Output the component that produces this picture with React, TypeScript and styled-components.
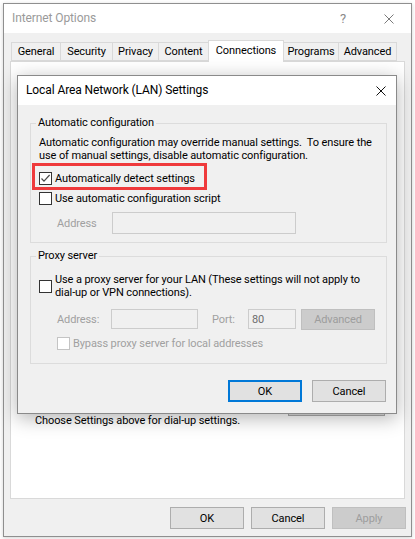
import React from "react"
import styled, { createGlobalStyle } from "styled-components"

const GlobalStyle = createGlobalStyle`
  html, body {
    margin: 0;
    padding: 0;
    background: #ffffff;
  }
  * {
    box-sizing: border-box;
  }
  body {
    font-family: Roboto, "Noto Sans", sans-serif;
    font-size: 11px;
    letter-spacing: -0.1px;
    color: #000000;
  }
`

const tabs = [
  { label: "General", w: 50 },
  { label: "Security", w: 53 },
  { label: "Privacy", w: 47 },
  { label: "Content", w: 51 },
  { label: "Connections", w: 76, active: true },
  { label: "Programs", w: 56 },
  { label: "Advanced", w: 59 },
]

const Page = styled.div`
  position: relative;
  width: 415px;
  height: 539px;
  padding: 3px 3px 2px 3px;
  background: #ffffff;
  overflow: hidden;
`

const Window = styled.div`
  width: 409px;
  height: 534px;
  border: 1px solid #8f8f8f;
  background: #f0f0f0;
  display: flex;
  flex-direction: column;
  box-shadow: 0 1px 4px rgba(0, 0, 0, 0.18);
`

const TitleBar = styled.div`
  height: 29px;
  background: #ffffff;
  display: flex;
  align-items: center;
  padding-left: 8px;
  flex-shrink: 0;
`

const Title = styled.div<{ $dim?: boolean }>`
  flex: 1;
  font-size: 12px;
  padding-bottom: 1px;
  color: ${(p) => (p.$dim ? "#9a9a9a" : "#000000")};
`

const CaptionButton = styled.div<{ $w: number }>`
  width: ${(p) => p.$w}px;
  height: 100%;
  display: flex;
  align-items: center;
  justify-content: center;
  color: #8a8a8a;
  font-size: 13px;
`

const WinBody = styled.div`
  flex: 1;
  display: flex;
  flex-direction: column;
  padding: 7px 6px 7px 6px;
  min-height: 0;
`

const TabStrip = styled.div`
  height: 21px;
  display: flex;
  align-items: flex-end;
  padding-left: 1px;
  position: relative;
  z-index: 1;
  flex-shrink: 0;
`

const Tab = styled.div<{ $w: number; $active?: boolean }>`
  width: ${(p) => p.$w}px;
  height: ${(p) => (p.$active ? 22 : 19)}px;
  margin-bottom: ${(p) => (p.$active ? -1 : 0)}px;
  margin-left: -1px;
  &:first-child {
    margin-left: 0;
  }
  border: 1px solid #d9d9d9;
  border-bottom: ${(p) => (p.$active ? "none" : "1px solid #d9d9d9")};
  background: ${(p) => (p.$active ? "#ffffff" : "#f0f0f0")};
  display: flex;
  align-items: center;
  justify-content: center;
  padding-bottom: ${(p) => (p.$active ? 2 : 0)}px;
  white-space: nowrap;
`

const Panel = styled.div`
  flex: 1;
  background: #ffffff;
  border: 1px solid #d9d9d9;
  padding: 332px 19px 0 24px;
  position: relative;
  z-index: 0;
`

const LanRow = styled.div`
  display: flex;
  justify-content: space-between;
  align-items: flex-start;
`

const Note = styled.div`
  padding-top: 20px;
  line-height: 13px;
`

const PushButton = styled.button<{ $w?: number; $variant?: "default" | "disabled" }>`
  width: ${(p) => p.$w ?? 74}px;
  height: 22px;
  font-family: inherit;
  font-size: 11px;
  letter-spacing: -0.1px;
  padding: 0;
  background: ${(p) => (p.$variant === "disabled" ? "#cccccc" : "#e1e1e1")};
  color: ${(p) => (p.$variant === "disabled" ? "#9d9d9d" : "#000000")};
  border: ${(p) =>
    p.$variant === "default"
      ? "2px solid #0078d7"
      : p.$variant === "disabled"
      ? "1px solid #bfbfbf"
      : "1px solid #adadad"};
  flex-shrink: 0;
`

const ButtonRow = styled.div<{ $gap: number; $top: number; $right: number }>`
  display: flex;
  justify-content: flex-end;
  gap: ${(p) => p.$gap}px;
  margin-top: ${(p) => p.$top}px;
  margin-right: ${(p) => p.$right}px;
  flex-shrink: 0;
`

const Dialog = styled.div`
  position: absolute;
  left: 17px;
  top: 75px;
  width: 380px;
  height: 339px;
  border: 1px solid #8a8a8a;
  background: #f0f0f0;
  display: flex;
  flex-direction: column;
  box-shadow: 0 4px 18px rgba(0, 0, 0, 0.3);
  z-index: 2;
`

const DialogBody = styled.div`
  flex: 1;
  display: flex;
  flex-direction: column;
  padding: 0 9px 10px 12px;
`

const Group = styled.fieldset<{ $top: number; $pt: number; $pb: number }>`
  margin: ${(p) => p.$top}px 0 0 0;
  padding: ${(p) => p.$pt}px 9px ${(p) => p.$pb}px 8px;
  border: 1px solid #dcdcdc;
  min-width: 0;
`

const Legend = styled.legend`
  padding: 0 2px;
  margin-left: -3px;
  line-height: 14px;
`

const Para = styled.p`
  margin: 0;
  line-height: 13px;
  white-space: nowrap;
`

const CheckRow = styled.div<{ $top: number; $indent?: number; $h?: number }>`
  display: flex;
  align-items: center;
  gap: 3px;
  margin-top: ${(p) => p.$top}px;
  padding-left: ${(p) => p.$indent ?? 0}px;
  min-height: ${(p) => p.$h ?? 13}px;
`

const Box = styled.span<{ $disabled?: boolean }>`
  width: 13px;
  height: 13px;
  border: 1px solid ${(p) => (p.$disabled ? "#c4c4c4" : "#333333")};
  background: #ffffff;
  display: flex;
  align-items: center;
  justify-content: center;
  flex-shrink: 0;
`

const CheckText = styled.span<{ $disabled?: boolean }>`
  line-height: 13px;
  color: ${(p) => (p.$disabled ? "#a0a0a0" : "#000000")};
  white-space: nowrap;
`

const FieldRow = styled.div<{ $top: number }>`
  display: flex;
  align-items: flex-start;
  padding-left: 18px;
  margin-top: ${(p) => p.$top}px;
`

const FieldLabel = styled.span<{ $w: number; $h: number; $left?: number }>`
  width: ${(p) => p.$w}px;
  height: ${(p) => p.$h}px;
  margin-left: ${(p) => p.$left ?? 0}px;
  display: flex;
  align-items: center;
  color: #a0a0a0;
  flex-shrink: 0;
`

const TextBox = styled.div<{ $w: number; $h: number; $right?: number }>`
  width: ${(p) => p.$w}px;
  height: ${(p) => p.$h}px;
  margin-right: ${(p) => p.$right ?? 0}px;
  border: 1px solid #cccccc;
  background: #f0f0f0;
  color: #6d6d6d;
  display: flex;
  align-items: center;
  padding-left: 3px;
  flex-shrink: 0;
`

const Highlight = styled.div`
  position: absolute;
  left: 32px;
  top: 163px;
  width: 175px;
  height: 27px;
  border: 3px solid #ef3a3c;
  z-index: 3;
  pointer-events: none;
`

const XIcon = ({ color }: { color: string }) => (
  <svg width="10" height="10" viewBox="0 0 10 10">
    <path d="M0.5 0.5 L9.5 9.5 M9.5 0.5 L0.5 9.5" stroke={color} strokeWidth="1" fill="none" />
  </svg>
)

const Check = () => (
  <svg width="11" height="11" viewBox="0 0 11 11">
    <path d="M1.5 5.5 L4 8.2 L9.6 2" stroke="#4a4a4a" strokeWidth="1.2" fill="none" />
  </svg>
)

const Checkbox = ({ checked, disabled }: { checked?: boolean; disabled?: boolean }) => (
  <Box $disabled={disabled}>{checked && <Check />}</Box>
)

export default function App() {
  return (
    <>
      <GlobalStyle />
      <Page>
        <Window>
          <TitleBar>
            <Title $dim>Internet Options</Title>
            <CaptionButton $w={46}>?</CaptionButton>
            <CaptionButton $w={45}>
              <XIcon color="#7a7a7a" />
            </CaptionButton>
          </TitleBar>
          <WinBody>
            <TabStrip>
              {tabs.map((t) => (
                <Tab key={t.label} $w={t.w} $active={t.active}>
                  {t.label}
                </Tab>
              ))}
            </TabStrip>
            <Panel>
              <LanRow>
                <Note>Choose Settings above for dial-up settings.</Note>
                <PushButton $w={97}>LAN settings</PushButton>
              </LanRow>
            </Panel>
            <ButtonRow $gap={7} $top={8} $right={-1}>
              <PushButton>OK</PushButton>
              <PushButton>Cancel</PushButton>
              <PushButton $variant="disabled">Apply</PushButton>
            </ButtonRow>
          </WinBody>
        </Window>

        <Dialog>
          <TitleBar>
            <Title>Local Area Network (LAN) Settings</Title>
            <CaptionButton $w={30}>
              <XIcon color="#111111" />
            </CaptionButton>
          </TitleBar>
          <DialogBody>
            <Group $top={11} $pt={6} $pb={8}>
              <Legend>Automatic configuration</Legend>
              <Para>Automatic configuration may override manual settings.&nbsp; To ensure the</Para>
              <Para>use of manual settings, disable automatic configuration.</Para>
              <CheckRow $top={6} $h={20}>
                <Checkbox checked />
                <CheckText>Automatically detect settings</CheckText>
              </CheckRow>
              <CheckRow $top={0} $h={20}>
                <Checkbox />
                <CheckText>Use automatic configuration script</CheckText>
              </CheckRow>
              <FieldRow $top={4}>
                <FieldLabel $w={55} $h={22}>Address</FieldLabel>
                <TextBox $w={184} $h={22} />
              </FieldRow>
            </Group>

            <Group $top={6} $pt={10} $pb={13}>
              <Legend>Proxy server</Legend>
              <CheckRow $top={0}>
                <Checkbox />
                <CheckText>
                  Use a proxy server for your LAN (These settings will not apply to
                  <br />
                  dial-up or VPN connections).
                </CheckText>
              </CheckRow>
              <FieldRow $top={10}>
                <FieldLabel $w={54} $h={20}>Address:</FieldLabel>
                <TextBox $w={87} $h={20} />
                <FieldLabel $w={36} $h={20} $left={14}>Port:</FieldLabel>
                <TextBox $w={48} $h={20} $right={5}>80</TextBox>
                <PushButton $variant="disabled" $w={74} style={{ height: 21 }}>
                  Advanced
                </PushButton>
              </FieldRow>
              <CheckRow $top={7} $indent={18}>
                <Checkbox disabled />
                <CheckText $disabled>Bypass proxy server for local addresses</CheckText>
              </CheckRow>
            </Group>

            <ButtonRow $gap={10} $top={16} $right={1}>
              <PushButton $variant="default">OK</PushButton>
              <PushButton>Cancel</PushButton>
            </ButtonRow>
          </DialogBody>
        </Dialog>
        <Highlight />
      </Page>
    </>
  )
}
